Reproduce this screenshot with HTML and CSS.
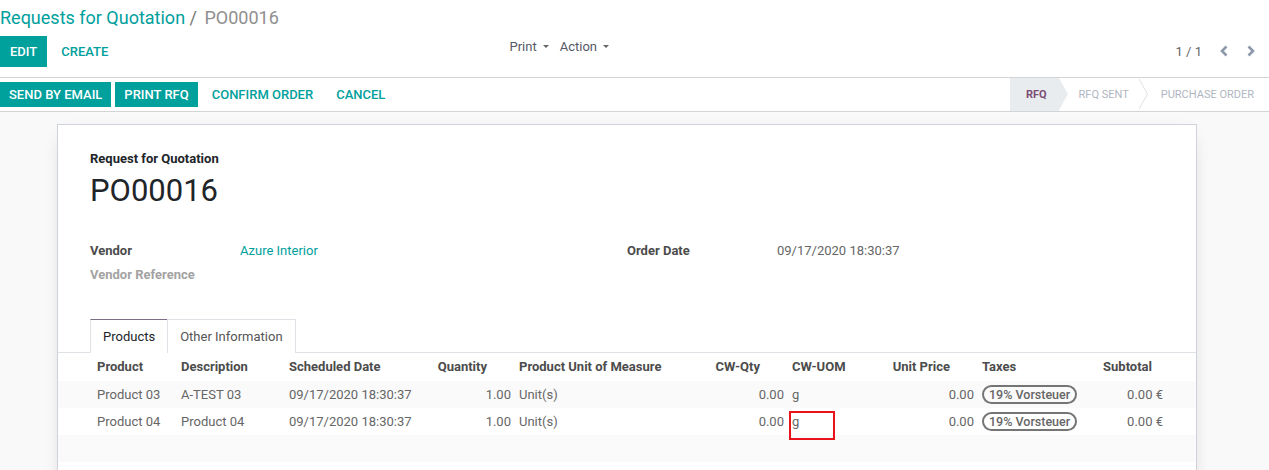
FILE: index.html
```html
<!DOCTYPE html>
<html>
<head>
<meta charset="utf-8">
<link rel="stylesheet" href="styles.css">
</head>
<body>
<div class="control-panel">
  <div class="breadcrumb">
    <a class="bc-link">Requests for Quotation</a>
    <span class="bc-sep">/</span>
    <span class="bc-active">PO00016</span>
  </div>
  <div class="cp-bottom">
    <div class="cp-left">
      <div class="cp-buttons">
        <button class="btn btn-primary btn-lg">EDIT</button>
        <button class="btn btn-link btn-lg">CREATE</button>
      </div>
      <div class="cp-sidebar">
        <span class="dd">Print <span class="caret"></span></span>
        <span class="dd">Action <span class="caret"></span></span>
      </div>
    </div>
    <div class="cp-right">
      <span class="pager-value">1 / 1</span>
      <svg class="chev" width="10" height="12" viewBox="0 0 10 12"><path d="M7.5 1.5 L3 6 L7.5 10.5" fill="none" stroke="#8d99ab" stroke-width="2.6"/></svg>
      <svg class="chev" width="10" height="12" viewBox="0 0 10 12"><path d="M2.5 1.5 L7 6 L2.5 10.5" fill="none" stroke="#8d99ab" stroke-width="2.6"/></svg>
    </div>
  </div>
</div>

<div class="statusbar">
  <div class="sb-buttons">
    <button class="btn btn-primary">SEND BY EMAIL</button>
    <button class="btn btn-primary">PRINT RFQ</button>
    <button class="btn btn-link">CONFIRM ORDER</button>
    <button class="btn btn-link">CANCEL</button>
  </div>
  <div class="sb-status">
    <span class="st st-active">RFQ</span>
    <span class="st">RFQ SENT</span>
    <span class="st st-last">PURCHASE ORDER</span>
  </div>
</div>

<div class="form-bg">
  <div class="sheet">
    <div class="title-label">Request for Quotation</div>
    <h1 class="title">PO00016</h1>

    <div class="groups">
      <div class="group">
        <div class="g-row"><span class="g-label">Vendor</span><span class="g-link">Azure Interior</span></div>
        <div class="g-row"><span class="g-label g-muted">Vendor Reference</span><span></span></div>
      </div>
      <div class="group">
        <div class="g-row"><span class="g-label">Order Date</span><span class="g-value">09/17/2020 18:30:37</span></div>
      </div>
    </div>

    <div class="tabs">
      <span class="tab tab-active">Products</span>
      <span class="tab">Other Information</span>
    </div>

    <table class="lines">
      <colgroup>
        <col style="width:119px"><col style="width:108px"><col style="width:135px"><col style="width:95px">
        <col style="width:185px"><col style="width:88px"><col style="width:92px"><col style="width:98px">
        <col style="width:112px"><col style="width:77px"><col style="width:29px">
      </colgroup>
      <thead>
        <tr>
          <th class="first">Product</th>
          <th>Description</th>
          <th>Scheduled Date</th>
          <th class="num">Quantity</th>
          <th>Product Unit of Measure</th>
          <th class="num">CW-Qty</th>
          <th>CW-UOM</th>
          <th class="num">Unit Price</th>
          <th>Taxes</th>
          <th class="num num-sub">Subtotal</th>
          <th></th>
        </tr>
      </thead>
      <tbody>
        <tr class="odd">
          <td class="first">Product 03</td>
          <td>A-TEST 03</td>
          <td>09/17/2020 18:30:37</td>
          <td class="num">1.00</td>
          <td>Unit(s)</td>
          <td class="num">0.00</td>
          <td>g</td>
          <td class="num">0.00</td>
          <td><span class="badge">19% Vorsteuer</span></td>
          <td class="num">0.00 €</td>
          <td></td>
        </tr>
        <tr>
          <td class="first">Product 04</td>
          <td>Product 04</td>
          <td>09/17/2020 18:30:37</td>
          <td class="num">1.00</td>
          <td>Unit(s)</td>
          <td class="num">0.00</td>
          <td>g</td>
          <td class="num">0.00</td>
          <td><span class="badge">19% Vorsteuer</span></td>
          <td class="num">0.00 €</td>
          <td></td>
        </tr>
        <tr class="odd filler"><td colspan="11"></td></tr>
        <tr class="filler"><td colspan="11"></td></tr>
      </tbody>
    </table>
  </div>
</div>

<div class="highlight"></div>
</body>
</html>
```

FILE: styles.css
```css
html, body {
  margin: 0;
  padding: 0;
}
body {
  font-family: Roboto, "Noto Sans", sans-serif;
  font-size: 13px;
  color: #4c4c4c;
  background: #f9f9f9;
  width: 1269px;
  height: 470px;
  overflow: hidden;
  position: relative;
}

.control-panel {
  background: #fff;
  border-bottom: 1px solid #d4d4d4;
  height: 78px;
  box-sizing: border-box;
}
.breadcrumb {
  height: 36px;
  line-height: 36px;
  font-size: 18px;
  white-space: nowrap;
}
.bc-link { color: #00a09d; }
.bc-sep { color: #777; margin: 0 3px 0 0; }
.bc-active { color: #8f8f8f; }

.cp-bottom {
  display: flex;
  height: 31px;
}
.cp-left {
  width: 634px;
  display: flex;
  align-items: center;
}
.cp-buttons { display: flex; gap: 4px; height: 31px; }
.cp-sidebar {
  margin-left: auto;
  margin-right: 25px;
  display: flex;
  gap: 11px;
  color: #555866;
  font-size: 13px;
  padding-bottom: 10px;
}
.dd { display: inline-flex; align-items: center; gap: 6px; }
.caret {
  width: 0; height: 0;
  border-left: 3px solid transparent;
  border-right: 3px solid transparent;
  border-top: 3px solid #666;
}
.cp-right {
  flex: 1;
  display: flex;
  justify-content: flex-end;
  align-items: center;
  padding-right: 13px;
  padding-bottom: 1px;
  box-sizing: border-box;
}
.pager-value { color: #666; font-size: 13px; margin-right: 0; }
.chev { margin-left: 17px; }

.btn {
  font-family: Roboto, sans-serif;
  font-size: 13px;
  font-weight: 500;
  border: 0;
  padding: 0 9px;
  height: 25px;
  margin: 0;
  cursor: pointer;
  border-radius: 0;
}
.btn-lg { height: 31px; padding: 0 10px; }
.btn-primary { background: #00a09d; color: #fff; }
.btn-link { background: transparent; color: #00a09d; }

.statusbar {
  background: #fff;
  border-bottom: 1px solid #d4d4d4;
  height: 34px;
  box-sizing: border-box;
  display: flex;
  justify-content: space-between;
  align-items: stretch;
}
.sb-buttons {
  display: flex;
  align-items: center;
  gap: 4px;
}
.sb-buttons .btn-link { padding: 0 10px; margin-left: 0; }
.sb-buttons .btn-link + .btn-link { margin-left: -1px; }
.sb-buttons .btn-link:first-of-type { margin-left: 0; }
.sb-status { display: flex; }
.st {
  position: relative;
  display: flex;
  align-items: center;
  padding: 0 10px 0 20px;
  font-size: 11px;
  color: #b0b6bf;
  font-weight: 400;
  white-space: nowrap;
}
.st::before {
  content: "";
  position: absolute;
  right: -9px;
  top: 0;
  border-top: 16.5px solid transparent;
  border-bottom: 16.5px solid transparent;
  border-left: 9px solid #dee2e6;
  z-index: 1;
}
.st::after {
  content: "";
  position: absolute;
  right: -8px;
  top: 0;
  border-top: 16.5px solid transparent;
  border-bottom: 16.5px solid transparent;
  border-left: 9px solid #fff;
  z-index: 2;
}
.st-active {
  background: #e9ecef;
  color: #7a4e74;
  font-weight: 700;
  padding-left: 16px;
  padding-right: 12px;
}
.st-active::after { border-left-color: #e9ecef; right: -8px; }
.st-active::before { border-left-color: #e9ecef; }
.st-last { padding-right: 15px; padding-left: 22px; }
.st-last::before, .st-last::after { display: none; }

.form-bg {
  padding: 12px 0 0 57px;
}
.sheet {
  width: 1140px;
  box-sizing: border-box;
  background: #fff;
  border: 1px solid #cfd4da;
  box-shadow: 0 5px 20px -12px rgba(0,0,0,0.4);
  padding: 26px 0 0 0;
  min-height: 400px;
}
.title-label {
  padding-left: 32px;
  font-weight: 700;
  font-size: 13px;
  color: #212529;
  line-height: 16px;
}
.title {
  margin: 4px 0 0 0;
  padding-left: 32px;
  font-size: 31px;
  font-weight: 400;
  color: #212529;
  line-height: 40px;
}
.groups {
  display: grid;
  grid-template-columns: 537px 537px;
  padding-left: 32px;
  margin-top: 27px;
}
.g-row {
  display: grid;
  grid-template-columns: 150px 1fr;
  height: 24px;
  align-items: center;
}
.g-label { font-weight: 700; color: #4c4c4c; }
.g-muted { color: #a3a3a3; }
.g-link { color: #00a09d; }
.g-value { color: #666; }

.tabs {
  margin-top: 33px;
  padding-left: 32px;
  display: flex;
  border-bottom: 1px solid #dee2e6;
  height: 34px;
  box-sizing: border-box;
}
.tab {
  display: flex;
  align-items: center;
  padding: 0 12px 0 12px;
  border: 1px solid #dee2e6;
  border-bottom: 0;
  color: #555;
  margin-bottom: -1px;
  background: #fff;
  height: 34px;
  box-sizing: border-box;
}
.tab-active {
  color: #212529;
  border-top: 1px solid #7c6f85;
  border-right: 0;
}

.lines {
  width: 1138px;
  table-layout: fixed;
  border-collapse: collapse;
}
.lines th {
  height: 26px;
  text-align: left;
  font-weight: 700;
  color: #4c4c4c;
  padding: 0 4px 2px 4px;
  white-space: nowrap;
  overflow: hidden;
}
.lines thead tr {
  box-shadow: 0 3px 5px -2px rgba(0,0,0,0.06);
}
.lines td {
  height: 27px;
  padding: 0 4px;
  color: #666;
  white-space: nowrap;
  overflow: hidden;
}
.lines .first { padding-left: 39px; }
.lines th.num { text-align: right; padding-right: 28px; }
.lines th.num-sub { padding-right: 15px; }
.lines td.num { text-align: right; }
.lines tr.odd td { background: #fafafa; }
.badge {
  display: inline-block;
  border: 2px solid #757575;
  border-radius: 10px;
  padding: 0 5px;
  line-height: 15px;
  font-size: 12.5px;
  font-weight: 500;
  color: #666;
}

.highlight {
  position: absolute;
  left: 789px;
  top: 411px;
  width: 46px;
  height: 29px;
  box-sizing: border-box;
  border: 2px solid #e8141a;
}
```
